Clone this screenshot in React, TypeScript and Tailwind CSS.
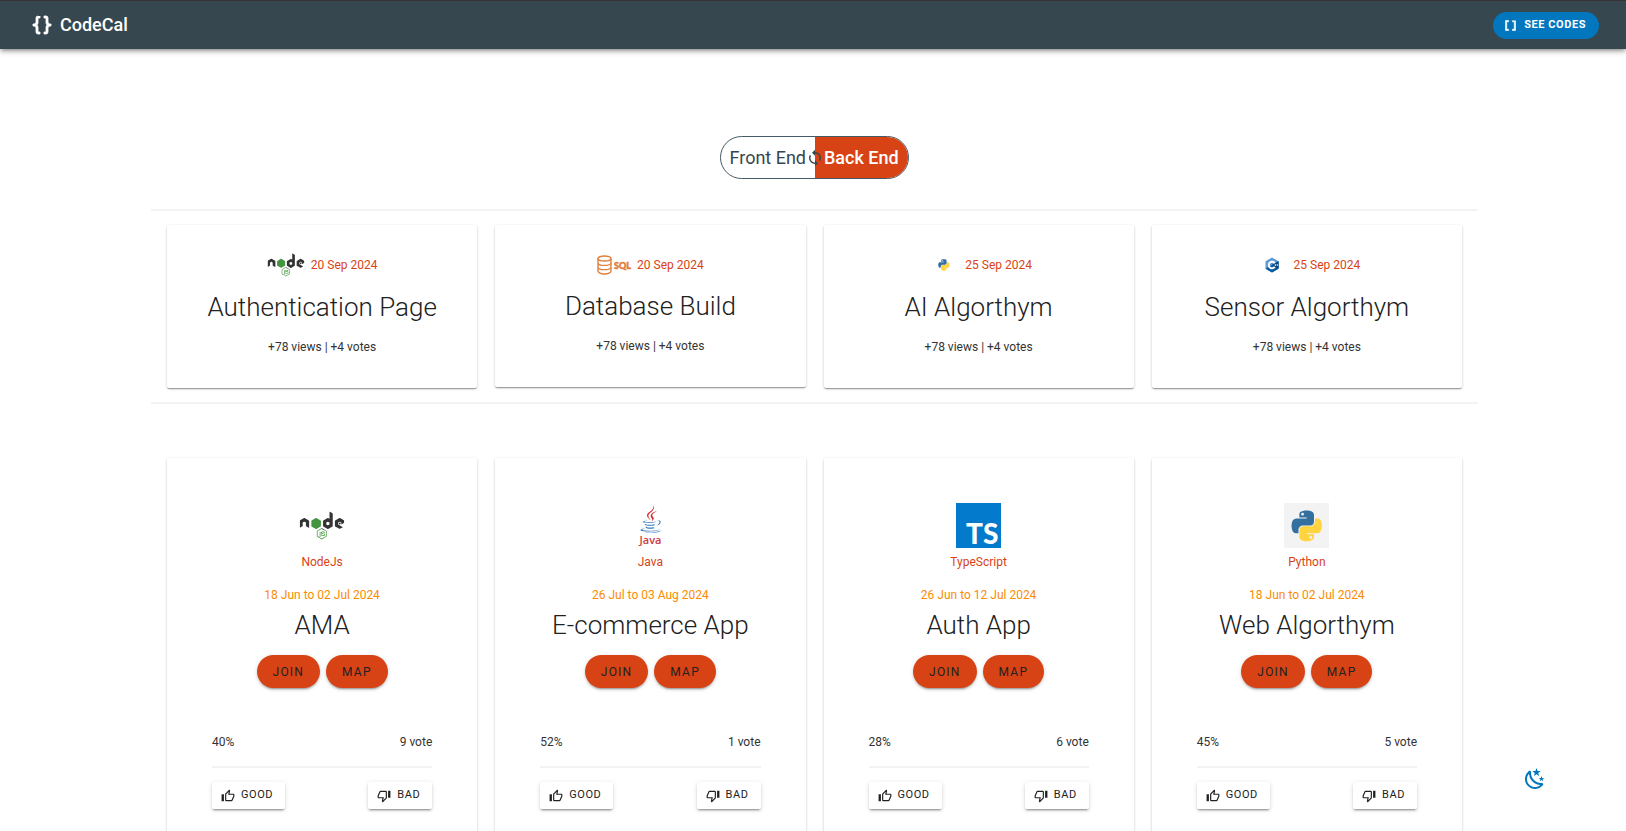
import type { ReactNode } from "react";
import { FaNode } from "react-icons/fa";

const icons = {
  braces:
    "M8,3A2,2 0 0,0 6,5V9A2,2 0 0,1 4,11H3V13H4A2,2 0 0,1 6,15V19A2,2 0 0,0 8,21H10V19H8V14A2,2 0 0,0 6,12A2,2 0 0,0 8,10V5H10V3M16,3A2,2 0 0,1 18,5V9A2,2 0 0,0 20,11H21V13H20A2,2 0 0,0 18,15V19A2,2 0 0,1 16,21H14V19H16V14A2,2 0 0,1 18,12A2,2 0 0,1 16,10V5H14V3H16Z",
  brackets: "M15,4V6H18V18H15V20H20V4M4,4V20H9V18H6V6H9V4H4Z",
  sync: "M12,18A6,6 0 0,1 6,12C6,11 6.25,10.03 6.7,9.2L5.24,7.74C4.46,8.97 4,10.43 4,12A8,8 0 0,0 12,20V23L16,19L12,15M12,4V1L8,5L12,9V6A6,6 0 0,1 18,12C18,13 17.75,13.97 17.3,14.8L18.76,16.26C19.54,15.03 20,13.57 20,12A8,8 0 0,0 12,4Z",
  thumbUp:
    "M5,9V21H1V9H5M9,21A2,2 0 0,1 7,19V9C7,8.45 7.22,7.95 7.59,7.59L14.17,1L15.23,2.06C15.5,2.33 15.67,2.7 15.67,3.11L15.64,3.43L14.69,8H21C22.11,8 23,8.9 23,10V12C23,12.26 22.95,12.5 22.86,12.73L19.84,19.78C19.54,20.5 18.83,21 18,21H9M9,19H18.03L21,12V10H12.21L13.34,4.68L9,9.03V19Z",
  thumbDown:
    "M19,15V3H23V15H19M15,3A2,2 0 0,1 17,5V15C17,15.55 16.78,16.05 16.41,16.41L9.83,23L8.77,21.94C8.5,21.67 8.33,21.3 8.33,20.88L8.36,20.57L9.31,16H3C1.89,16 1,15.1 1,14V12C1,11.74 1.05,11.5 1.14,11.27L4.16,4.22C4.46,3.5 5.17,3 6,3H15M15,5H5.97L3,12V14H11.78L10.65,19.32L15,14.97V5Z",
  night:
    "M17.75,4.09L15.22,6.03L16.13,9.09L13.5,7.28L10.87,9.09L11.78,6.03L9.25,4.09L12.44,4L13.5,1L14.56,4L17.75,4.09M21.25,11L19.61,12.25L20.2,14.23L18.5,13.06L16.8,14.23L17.39,12.25L15.75,11L17.81,10.95L18.5,9L19.19,10.95L21.25,11M18.97,15.95C19.8,15.87 20.69,17.05 20.16,17.8C19.84,18.25 19.5,18.67 19.08,19.07C15.17,23 8.84,23 4.94,19.07C1.03,15.17 1.03,8.83 4.94,4.93C5.34,4.53 5.76,4.17 6.21,3.85C6.96,3.32 8.14,4.21 8.06,5.04C7.79,7.9 8.75,10.87 10.95,13.06C13.14,15.26 16.1,16.22 18.97,15.95M17.33,17.97C14.5,17.81 11.7,16.64 9.53,14.5C7.36,12.31 6.2,9.5 6.04,6.68C3.23,9.82 3.34,14.64 6.35,17.66C9.37,20.67 14.19,20.78 17.33,17.97Z",
};

function Icon({ name, className, stroke = 0 }: { name: keyof typeof icons; className: string; stroke?: number }) {
  return (
    <svg viewBox="0 0 24 24" aria-hidden="true" className={className} fill="currentColor" stroke="currentColor" strokeWidth={stroke}>
      <path d={icons[name]} />
    </svg>
  );
}

function NodeLogo({ id, className }: { id: string; className: string }) {
  return (
    <svg viewBox="0 50 640 412" aria-hidden="true" className={className}>
      <defs>
        <clipPath id={`${id}-word`}>
          <path d="M0 0H165V512H0ZM312 0H640V322H312Z" />
        </clipPath>
        <clipPath id={`${id}-green`}>
          <path d="M165 0H312V322H400V512H165Z" />
        </clipPath>
      </defs>
      <g clipPath={`url(#${id}-word)`}>
        <FaNode y="-64" size={640} color="#333333" />
      </g>
      <g clipPath={`url(#${id}-green)`}>
        <FaNode y="-64" size={640} color="#43953f" />
      </g>
    </svg>
  );
}

function SqlLogo() {
  return (
    <svg viewBox="0 0 34 20" aria-hidden="true" className="h-5 w-[34px] overflow-visible">
      <g fill="none" stroke="#e0803f" strokeWidth="1.4">
        <ellipse cx="7.500" cy="3.500" rx="6.500" ry="2.500" />
        <path d="M1 3.500V16c0 1.600 2.800 3 6.500 3s6.500-1.400 6.500-3V3.500M1 7.700c0 1.500 2.800 2.700 6.500 2.700s6.500-1.200 6.500-2.700M1 11.900c0 1.500 2.800 2.700 6.500 2.700s6.500-1.200 6.500-2.700" />
      </g>
      <text x="17" y="13.500" fill="#e0803f" stroke="#e0803f" strokeWidth=".5" fontFamily="Lato, sans-serif" fontWeight="900" fontSize="9">
        SQL
      </text>
    </svg>
  );
}

function PythonLogo({ className }: { className: string }) {
  return (
    <svg viewBox="13 0 104 108" aria-hidden="true" className={className}>
      <path
        fill="#34709f"
        d="M63.391 1.988c-4.222.02-8.252.379-11.8 1.007-10.45 1.846-12.346 5.71-12.346 12.837v9.411h24.693v3.137H29.977c-7.176 0-13.46 4.313-15.426 12.521-2.268 9.405-2.368 15.275 0 25.096 1.755 7.311 5.947 12.519 13.124 12.519h8.491V67.234c0-8.151 7.051-15.34 15.426-15.34h24.665c6.866 0 12.346-5.654 12.346-12.548V15.833c0-6.693-5.646-11.72-12.346-12.837-4.244-.706-8.645-1.027-12.866-1.008zM50.037 9.557c2.55 0 4.634 2.117 4.634 4.721 0 2.593-2.083 4.69-4.634 4.69-2.56 0-4.633-2.097-4.633-4.69-.001-2.604 2.073-4.721 4.633-4.721z"
      />
      <path
        fill="#ffd43f"
        d="M91.682 28.38v10.966c0 8.5-7.208 15.655-15.426 15.655H51.591c-6.756 0-12.346 5.783-12.346 12.549v23.515c0 6.691 5.818 10.628 12.346 12.547 7.816 2.297 16.221 2.713 24.665 0 6.216-1.801 12.346-5.423 12.346-12.547v-9.412H63.938v-3.138h37.012c7.176 0 9.852-5.005 12.348-12.519 2.578-7.735 2.467-15.174 0-25.096-1.774-7.145-5.161-12.521-12.348-12.521h-9.268zM77.809 87.927c2.561 0 4.634 2.097 4.634 4.692 0 2.602-2.074 4.719-4.634 4.719-2.55 0-4.633-2.117-4.633-4.719 0-2.595 2.083-4.692 4.633-4.692z"
      />
    </svg>
  );
}

function CppLogo() {
  return (
    <svg viewBox="0 0 28 32" aria-hidden="true" className="h-4 w-[14px]">
      <path fill="#5c9bd6" d="M14 1 27 8.500V23.500L14 31 1 23.500V8.500Z" />
      <path fill="#085a9c" d="M14 16 27 8.500V23.500L14 31 1 23.500Z" />
      <path fill="#0a4480" d="M14 16 27 8.500V23.500Z" />
      <path fill="none" stroke="#fff" strokeWidth="4" d="M19.500 12.500A6.500 6.500 0 1 0 19.500 19.500" />
      <path stroke="#fff" strokeWidth="1.200" d="M19 16h4M21 14v4M23.500 16h3M25 14.500v3" />
    </svg>
  );
}

function JavaLogo() {
  return (
    <svg viewBox="0 0 45 45" aria-hidden="true" className="size-[45px] overflow-visible">
      <g transform="translate(8.500 2) scale(.22)">
        <path
          fill="#3a7ab8"
          d="M47.617 98.12s-4.767 2.774 3.397 3.71c9.892 1.13 14.947.968 25.845-1.092 0 0 2.871 1.795 6.873 3.351-24.439 10.47-55.308-.607-36.115-5.969zm-2.988-13.665s-5.348 3.959 2.823 4.805c10.567 1.091 18.91 1.18 33.354-1.6 0 0 1.993 2.025 5.132 3.131-29.542 8.64-62.446.68-41.309-6.336zM102.123 108.229s3.529 2.91-3.888 5.159c-14.102 4.272-58.706 5.56-71.094.171-4.451-1.938 3.899-4.625 6.526-5.192 2.739-.593 4.303-.485 4.303-.485-4.953-3.487-32.013 6.85-13.743 9.815 49.821 8.076 90.817-3.637 77.896-9.468zM49.912 70.294s-22.686 5.389-8.033 7.348c6.188.828 18.518.638 30.011-.326 9.39-.789 18.813-2.474 18.813-2.474s-3.308 1.419-5.704 3.053c-23.042 6.061-67.544 3.238-54.731-2.958 10.832-5.239 19.644-4.643 19.644-4.643zm40.697 22.747c23.421-12.167 12.591-23.86 5.032-22.285-1.848.385-2.677.72-2.677.72s.688-1.079 2-1.543c14.953-5.255 26.451 15.503-4.823 23.725 0-.002.359-.327.468-.617zM52.214 126.021c22.476 1.437 57-.8 57.817-11.436 0 0-1.571 4.032-18.577 7.231-19.186 3.612-42.854 3.191-56.887.874 0 .001 2.875 2.381 17.647 3.331z"
        />
        <path
          fill="#d0282e"
          d="M69.802 61.271c6.025 6.935-1.58 13.17-1.58 13.17s15.289-7.891 8.269-17.777c-6.559-9.215-11.587-13.792 15.635-29.58 0 .001-42.731 10.67-22.324 34.187zM76.491 1.587S89.459 14.563 64.188 34.51c-20.266 16.006-4.621 25.13-.007 35.559-11.831-10.673-20.509-20.07-14.688-28.815C58.041 28.42 81.722 22.195 76.491 1.587z"
        />
      </g>
      <text x="22.500" y="41" textAnchor="middle" fill="#cf3a3f" fontFamily="'Open Sans', sans-serif" fontWeight="600" fontSize="11">
        Java
      </text>
    </svg>
  );
}

function TsLogo() {
  return (
    <svg viewBox="0 0 45 45" aria-hidden="true" className="size-[45px] overflow-visible">
      <rect width="45" height="45" fill="#037acc" />
      <text x="10" y="41" fill="#fff" fontFamily="Lato, sans-serif" fontWeight="900" fontSize="28">
        TS
      </text>
    </svg>
  );
}

interface Upcoming {
  title: string;
  date: string;
  logo: ReactNode;
}

const upcoming: Upcoming[] = [
  {
    title: "Authentication Page",
    date: "20 Sep 2024",
    logo: (
      <span className="flex h-6 w-[44px] items-center">
        <NodeLogo id="node-small" className="h-6 w-[38px]" />
      </span>
    ),
  },
  {
    title: "Database Build",
    date: "20 Sep 2024",
    logo: (
      <span className="flex h-[23px] w-[40px] items-center">
        <SqlLogo />
      </span>
    ),
  },
  {
    title: "AI Algorthym",
    date: "25 Sep 2024",
    logo: (
      <span className="flex h-6 w-[40px] items-center pl-[13px]">
        <PythonLogo className="size-3" />
      </span>
    ),
  },
  {
    title: "Sensor Algorthym",
    date: "25 Sep 2024",
    logo: (
      <span className="flex h-6 w-[40px] items-center pl-[11px]">
        <CppLogo />
      </span>
    ),
  },
];

interface Project {
  title: string;
  language: string;
  dates: string;
  percent: string;
  votes: string;
  logo: ReactNode;
}

const projects: Project[] = [
  {
    title: "AMA",
    language: "NodeJs",
    dates: "18 Jun to 02 Jul 2024",
    percent: "40%",
    votes: "9 vote",
    logo: <NodeLogo id="node-large" className="h-[29px] w-[46px]" />,
  },
  { title: "E-commerce App", language: "Java", dates: "26 Jul to 03 Aug 2024", percent: "52%", votes: "1 vote", logo: <JavaLogo /> },
  { title: "Auth App", language: "TypeScript", dates: "26 Jun to 12 Jul 2024", percent: "28%", votes: "6 vote", logo: <TsLogo /> },
  {
    title: "Web Algorthym",
    language: "Python",
    dates: "18 Jun to 02 Jul 2024",
    percent: "45%",
    votes: "5 vote",
    logo: (
      <span className="flex size-[45px] items-center justify-center bg-[#f3f3f3]">
        <PythonLogo className="size-8" />
      </span>
    ),
  },
];

const cardShadow =
  "rounded-xs bg-white shadow-[0_2px_1px_-1px_rgba(0,0,0,0.2),0_1px_1px_0_rgba(0,0,0,0.14),0_1px_3px_0_rgba(0,0,0,0.2)]";
const raised =
  "shadow-[0_3px_1px_-2px_rgba(0,0,0,0.2),0_2px_2px_0_rgba(0,0,0,0.14),0_1px_5px_0_rgba(0,0,0,0.12)]";

function UpcomingCard({ item }: { item: Upcoming }) {
  return (
    <article className={`flex flex-col items-center pt-7 pb-[31px] ${cardShadow}`}>
      <div className="flex items-center text-xs text-[#d84315]">
        {item.logo}
        <time>{item.date}</time>
      </div>
      <h2 className="mt-[14px] text-[26px] leading-8 font-light">{item.title}</h2>
      <p className="mt-[14px] text-xs leading-5 text-[#333333]">+78 views | +4 votes</p>
    </article>
  );
}

function ProjectCard({ item }: { item: Project }) {
  return (
    <article className={`flex flex-col items-center p-[45px] ${cardShadow}`}>
      <div className="flex h-[45px] items-center">{item.logo}</div>
      <p className="mt-1 text-xs leading-5 text-[#d84315]">{item.language}</p>
      <time className="mt-[13px] text-xs leading-5 text-[#fb8c00]">{item.dates}</time>
      <h2 className="mt-1 text-[26px] leading-8 font-light">{item.title}</h2>
      <div className="mt-[14px] flex gap-[6px]">
        <button type="button" className={`h-[33px] rounded-full bg-[#d84315] px-4 text-xs tracking-widest ${raised}`}>
          JOIN
        </button>
        <button type="button" className={`h-[33px] rounded-full bg-[#d84315] px-4 text-xs tracking-widest ${raised}`}>
          MAP
        </button>
      </div>
      <div className="mt-[44px] flex w-full justify-between text-xs leading-5 text-[#333333]">
        <span>{item.percent}</span>
        <span>{item.votes}</span>
      </div>
      <hr className="mt-[14px] w-full border-t-2 border-[#f3f3f3]" />
      <div className="mt-[14px] flex w-full justify-between">
        <button type="button" className={`flex h-[27px] items-center gap-[6px] rounded-xs bg-white pr-3 pl-[9px] text-[11px] tracking-wider ${raised}`}>
          <Icon name="thumbUp" className="size-[14px]" />
          GOOD
        </button>
        <button type="button" className={`flex h-[27px] items-center gap-[6px] rounded-xs bg-white pr-3 pl-[9px] text-[11px] tracking-wider ${raised}`}>
          <Icon name="thumbDown" className="size-[14px]" />
          BAD
        </button>
      </div>
    </article>
  );
}

export default function App() {
  return (
    <div className="min-h-screen bg-white font-[Roboto,sans-serif] text-[#212121]">
      <header className="flex h-[49px] items-center justify-between border-t border-[#333333] bg-[#37474f] pr-[27px] pl-[30px] text-white shadow-[0_2px_4px_-1px_rgba(0,0,0,0.4),0_4px_5px_0_rgba(0,0,0,0.14)]">
        <a href="#" className="flex items-center gap-[6px] text-lg font-medium">
          <Icon name="braces" className="size-6" stroke={0.8} />
          CodeCal
        </a>
        <button type="button" className="flex h-[27px] items-center gap-[6px] rounded-full bg-[#0277bd] pr-[13px] pl-[10px] text-[11px] font-bold tracking-wider">
          <Icon name="brackets" className="size-[15px]" stroke={1} />
          SEE CODES
        </button>
      </header>

      <main className="pr-[148px] pl-[151px]">
        <div className="flex justify-center pt-[87px] pb-[30px]">
          <div className="relative grid h-[43px] w-[189px] grid-cols-2 overflow-hidden rounded-full border border-[#455a64] text-lg">
            <button type="button" className="text-[#37474f]">
              Front End
            </button>
            <button type="button" className="bg-[#d84315] font-medium text-white">
              Back End
            </button>
            <span className="pointer-events-none absolute inset-0 flex items-center justify-center text-[#37474f]">
              <Icon name="sync" className="size-[18px]" />
            </span>
          </div>
        </div>

        <section className="grid grid-cols-4 items-start gap-[18px] border-y-2 border-[#f3f3f3] px-4 py-[14px]">
          {upcoming.map((item) => (
            <UpcomingCard key={item.title} item={item} />
          ))}
        </section>

        <section className="mt-[54px] grid grid-cols-4 gap-[18px] px-4 pb-8">
          {projects.map((item) => (
            <ProjectCard key={item.title} item={item} />
          ))}
        </section>
      </main>

      <button type="button" aria-label="Toggle dark mode" className="fixed right-[79px] bottom-[40px] text-[#0277bd]">
        <Icon name="night" className="size-6" />
      </button>
    </div>
  );
}
